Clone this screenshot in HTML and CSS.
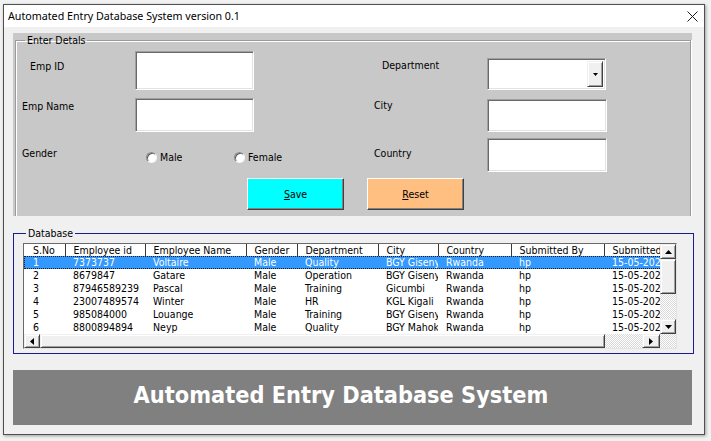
FILE: index.html
```html
<!DOCTYPE html>
<html>
<head>
<meta charset="utf-8">
<title>Automated Entry Database System</title>
<link rel="stylesheet" href="styles.css">
</head>
<body>
<div class="window">
  <div class="titlebar">
    <span class="title">Automated Entry Database System version 0.1</span>
    <svg class="close" width="11" height="11" viewBox="0 0 11 11"><path d="M0.5 0.5L10.5 10.5M10.5 0.5L0.5 10.5" stroke="#1a1a1a" stroke-width="1"/></svg>
  </div>
  <div class="client">
    <div class="panel">
      <fieldset class="details">
        <legend>Enter Detals</legend>
        <div class="form">
          <label class="lbl l-empid">Emp ID</label>
          <div class="tb tb-empid"></div>
          <label class="lbl l-dept">Department</label>
          <div class="tb combo"><span class="dd"><svg width="5" height="3" viewBox="0 0 5 3"><path d="M0 0H5L2.5 3Z" fill="#000"/></svg></span></div>

          <label class="lbl l-name">Emp Name</label>
          <div class="tb tb-name"></div>
          <label class="lbl l-city">City</label>
          <div class="tb tb-city"></div>

          <label class="lbl l-gender">Gender</label>
          <div class="radios">
            <span class="radio r-male"><i class="dot"></i>Male</span>
            <span class="radio"><i class="dot"></i>Female</span>
          </div>
          <label class="lbl l-country">Country</label>
          <div class="tb tb-country"></div>

          <div class="buttons">
            <button class="btn save"><u>S</u>ave</button>
            <button class="btn reset"><u>R</u>eset</button>
          </div>
        </div>
      </fieldset>
    </div>

    <fieldset class="db">
      <legend>Database</legend>
      <div class="list">
        <div class="rows">
          <table>
            <colgroup>
              <col style="width:41px"><col style="width:80px"><col style="width:101px"><col style="width:51px"><col style="width:81px"><col style="width:60px"><col style="width:73px"><col style="width:93px"><col style="width:80px">
            </colgroup>
            <thead>
              <tr><th class="c1">S.No</th><th>Employee id</th><th>Employee Name</th><th>Gender</th><th>Department</th><th>City</th><th>Country</th><th>Submitted By</th><th>Submitted Date</th></tr>
            </thead>
            <tbody>
              <tr class="sel"><td class="c1">1</td><td>7373737</td><td>Voltaire</td><td>Male</td><td>Quality</td><td>BGY Gisenyi</td><td>Rwanda</td><td>hp</td><td>15-05-2021</td></tr>
              <tr><td class="c1">2</td><td>8679847</td><td>Gatare</td><td>Male</td><td>Operation</td><td>BGY Gisenyi</td><td>Rwanda</td><td>hp</td><td>15-05-2021</td></tr>
              <tr><td class="c1">3</td><td>87946589239</td><td>Pascal</td><td>Male</td><td>Training</td><td>Gicumbi</td><td>Rwanda</td><td>hp</td><td>15-05-2021</td></tr>
              <tr><td class="c1">4</td><td>23007489574</td><td>Winter</td><td>Male</td><td>HR</td><td>KGL Kigali</td><td>Rwanda</td><td>hp</td><td>15-05-2021</td></tr>
              <tr><td class="c1">5</td><td>985084000</td><td>Louange</td><td>Male</td><td>Training</td><td>BGY Gisenyi</td><td>Rwanda</td><td>hp</td><td>15-05-2021</td></tr>
              <tr><td class="c1">6</td><td>8800894894</td><td>Neyp</td><td>Male</td><td>Quality</td><td>BGY Mahoko</td><td>Rwanda</td><td>hp</td><td>15-05-2021</td></tr>
            </tbody>
          </table>
        </div>
        <div class="vscroll">
          <span class="sb-btn v-btn"><svg width="7" height="4" viewBox="0 0 7 4"><path d="M0 4H7L3.5 0Z" fill="#000"/></svg></span>
          <span class="sb-btn v-thumb"></span>
          <span class="track"></span>
          <span class="sb-btn v-btn"><svg width="7" height="4" viewBox="0 0 7 4"><path d="M0 0H7L3.5 4Z" fill="#000"/></svg></span>
        </div>
        <div class="hscroll">
          <span class="sb-btn h-btn"><svg width="4" height="7" viewBox="0 0 4 7"><path d="M4 0V7L0 3.5Z" fill="#000"/></svg></span>
          <span class="sb-btn h-thumb"></span>
          <span class="track"></span>
          <span class="sb-btn h-btn h-right"><svg width="4" height="7" viewBox="0 0 4 7"><path d="M0 0V7L4 3.5Z" fill="#000"/></svg></span>
        </div>
        <div class="corner"></div>
      </div>
    </fieldset>

    <div class="banner">Automated Entry Database System</div>
  </div>
</div>
</body>
</html>
```

FILE: styles.css
```css
* { box-sizing: border-box; }
html, body { margin: 0; padding: 0; }
body {
  width: 711px;
  height: 441px;
  overflow: hidden;
  background: #f2f2f2;
  font-family: "DejaVu Sans Condensed", "DejaVu Sans", sans-serif;
  font-stretch: condensed;
  font-size: 10.5px;
  color: #000;
}
.window {
  margin: 4px 0 0 3px;
  width: 702px;
  height: 431px;
  border: 1px solid #4f4f4f;
  background: #f0f0f0;
  box-shadow: 1px 1px 3px rgba(0,0,0,0.35);
  display: flex;
  flex-direction: column;
}
.titlebar {
  flex: none;
  height: 22px;
  background: #fff;
  display: flex;
  align-items: center;
  justify-content: space-between;
  padding: 0 6px 0 4px;
}
.title {
  font-family: "Noto Sans", sans-serif;
  font-stretch: normal;
  font-size: 10.7px;
  color: #000;
}
.close { display: block; }
.client {
  flex: 1;
  padding: 6px 0 0 9px;
  display: flex;
  flex-direction: column;
}

/* Enter details panel */
.panel {
  width: 679px;
  height: 183px;
  background: #c8c8c8;
  padding: 1px 1px 0 2px;
}
.details {
  margin: 0;
  min-width: 0;
  height: 182px;
  padding: 4px 0 0 6px;
  border: 1px solid #9a9a9a;
  border-bottom: 0;
  box-shadow: inset 1px 1px #fff, 1px 0 #fff;
}
.details legend, .db legend {
  margin-left: 3px;
  padding: 0 2px;
  line-height: 13px;
  font-size: 10.5px;
}
.form {
  display: grid;
  grid-template-columns: 113px 119px 120px 113px 119px;
  grid-template-rows: 47px 40px 40px 31px;
  align-items: start;
}
.lbl { line-height: 13px; white-space: nowrap; }
.l-empid { grid-area: 1 / 1; margin: 9px 0 0 8px; }
.tb-empid { grid-area: 1 / 2; }
.l-dept { grid-area: 1 / 4; margin: 8px 0 0 8px; }
.combo { grid-area: 1 / 5; }
.l-name { grid-area: 2 / 1; margin-top: 2px; }
.tb-name { grid-area: 2 / 2; }
.l-city { grid-area: 2 / 4; margin-top: 1px; }
.tb-city { grid-area: 2 / 5; }
.l-gender { grid-area: 3 / 1; margin-top: 9px; }
.radios { grid-row: 3; grid-column: 2 / 4; }
.l-country { grid-area: 3 / 4; margin-top: 9px; }
.tb-country { grid-area: 3 / 5; }
.buttons { grid-row: 4; grid-column: 2 / 5; }

.tb {
  background: #fff;
  border: 1px solid;
  border-color: #a0a0a0 #fff #fff #a0a0a0;
  box-shadow: inset 1px 1px #6a6a6a, inset -1px -1px #e3e3e3;
}
.tb-empid { width: 119px; height: 39px; }
.combo {
  width: 119px;
  height: 32px;
  margin-top: 7px;
  display: flex;
  justify-content: flex-end;
  padding: 2px;
}
.dd {
  width: 16px;
  height: 100%;
  background: #f0f0f0;
  border: 1px solid;
  border-color: #f0f0f0 #404040 #404040 #f0f0f0;
  box-shadow: inset 1px 1px #fff, inset -1px -1px #a0a0a0;
  display: flex;
  align-items: center;
  justify-content: center;
}
.dd svg { display: block; }
.tb-name { width: 119px; height: 34px; }
.tb-city { width: 120px; height: 33px; margin-top: 1px; }
.tb-country { width: 120px; height: 34px; }

.radios {
  margin-top: 13px;
  padding-left: 11px;
  display: flex;
  line-height: 13px;
}
.radio { display: flex; align-items: center; gap: 3px; }
.r-male { width: 88px; }
.dot {
  width: 11px;
  height: 11px;
  border-radius: 50%;
  background: #fff;
  border: 1px solid;
  border-color: #8a8a8a #f4f4f4 #f4f4f4 #8a8a8a;
  box-shadow: inset 1px 1px #5c5c5c;
}

.buttons {
  display: flex;
  gap: 23px;
  padding-left: 112px;
}
.btn {
  width: 97px;
  height: 32px;
  padding: 0;
  font: inherit;
  color: #000;
  border: 1px solid;
  border-color: #fff #404040 #404040 #fff;
  box-shadow: inset -1px -1px #808080;
}
.save { background: #00ffff; }
.reset { background: #ffbf80; }
.btn u { text-decoration-thickness: 1px; text-underline-offset: 1px; }

/* Database */
.db {
  margin: 11px 0 0;
  min-width: 0;
  width: 681px;
  padding: 3px 16px 4px 9px;
  border: 1px solid #1c1c8e;
}
.list {
  width: 654px;
  height: 106px;
  border: 1px solid;
  border-color: #6a6a6a #e3e3e3 #e3e3e3 #6a6a6a;
  background: #fff;
  display: grid;
  grid-template-columns: 636px 16px;
  grid-template-rows: 90px 14px;
}
.rows { overflow: hidden; }
table {
  border-collapse: collapse;
  table-layout: fixed;
  width: 660px;
}
th, td {
  padding: 0 0 0 8px;
  text-align: left;
  font-weight: normal;
  white-space: nowrap;
  overflow: hidden;
  line-height: 13px;
  height: 13px;
}
th {
  height: 12px;
  line-height: 12px;
  border-right: 1px solid #3a3a3a;
}
.c1 { padding-left: 9px; }
tr.sel td { background: #3399ff; color: #fff; }
tr.sel { outline: 1px dotted #1a1a1a; outline-offset: -1px; }

.sb-btn {
  background: #f0f0f0;
  border: 1px solid;
  border-color: #f0f0f0 #404040 #404040 #f0f0f0;
  box-shadow: inset 1px 1px #fff, inset -1px -1px #a0a0a0;
  display: flex;
  align-items: center;
  justify-content: center;
}
.sb-btn svg { display: block; }
.track, .corner {
  background: repeating-conic-gradient(#ffffff 0 25%, #d8d8d8 0 50%) 0 0 / 2px 2px;
}
.vscroll { display: flex; flex-direction: column; }
.v-btn { height: 15px; flex: none; }
.v-thumb { height: 35px; flex: none; }
.vscroll .track { flex: 1; }
.hscroll { display: flex; }
.h-btn { width: 16px; flex: none; }
.h-right { width: 18px; }
.h-thumb { width: 565px; flex: none; }
.hscroll .track { flex: 1; }

/* Banner */
.banner {
  margin-top: 16px;
  width: 679px;
  height: 55px;
  background: #808080;
  color: #fff;
  font-family: "DejaVu Sans Condensed", "DejaVu Sans", sans-serif;
  font-stretch: condensed;
  font-weight: bold;
  font-size: 23.3px;
  display: flex;
  align-items: center;
  justify-content: center;
  padding: 0 23px 6px 0;
}
```
